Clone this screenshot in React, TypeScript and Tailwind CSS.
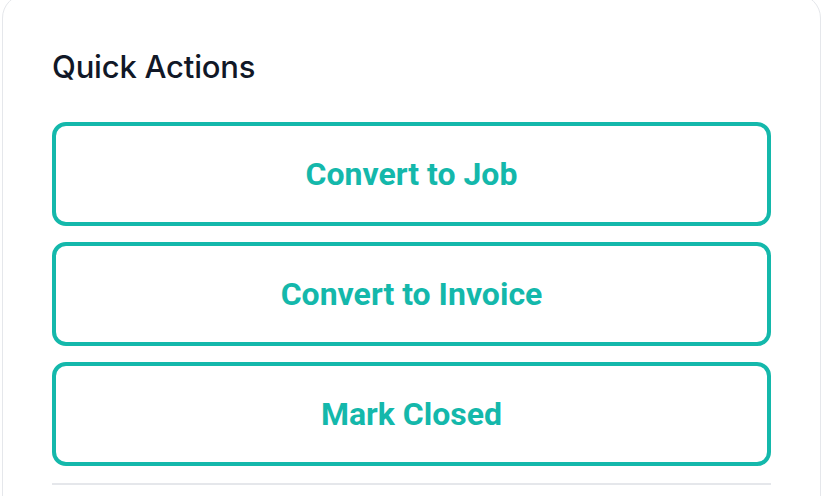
import React from 'react'

const actions = ['Convert to Job', 'Convert to Invoice', 'Mark Closed']

export default function App() {
  return (
    <div className="h-screen w-full overflow-hidden bg-white">
      <div className="ml-[2px] -mt-[6px] w-[819px] rounded-[24px] border border-[#e5e7eb] bg-white px-[49px] pt-[54px] pb-[40px]">
        <h2
          className="text-[31px] leading-[36px] font-medium text-[#111827] tracking-[-0.2px]"
          style={{ fontFamily: 'Inter, "Noto Sans", sans-serif' }}
        >
          Quick Actions
        </h2>
        <div className="mt-[37px] flex flex-col gap-[16px]">
          {actions.map((label) => (
            <button
              key={label}
              type="button"
              className="flex h-[104px] w-full items-center justify-center rounded-[14px] border-4 border-[#14b8ab] bg-white text-[32px] font-bold text-[#14b8ab]"
              style={{ fontFamily: 'Roboto, "Liberation Sans", sans-serif' }}
            >
              {label}
            </button>
          ))}
        </div>
        <div className="mt-[17px] h-[2px] w-full bg-[#e5e7eb]" />
      </div>
    </div>
  )
}
